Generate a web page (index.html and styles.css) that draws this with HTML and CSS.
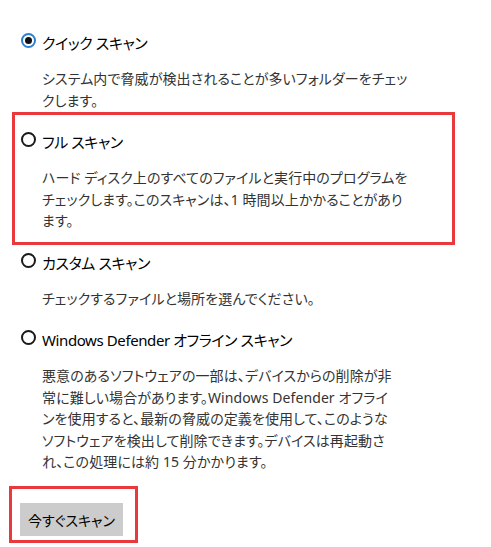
FILE: index.html
```html
<!DOCTYPE html>
<html lang="ja">
<head>
<meta charset="utf-8">
<title>スキャンのオプション</title>
<link rel="stylesheet" href="styles.css">
</head>
<body>
<main class="page">
  <section class="option">
    <div class="option-title"><span class="radio radio-checked"></span><span>クイック スキャン</span></div>
    <p class="option-desc">システム内で脅威が検出されることが多いフォルダーをチェッ<br>クします。</p>
  </section>
  <section class="option option-highlight">
    <div class="option-title"><span class="radio"></span><span>フル スキャン</span></div>
    <p class="option-desc">ハード ディスク上のすべてのファイルと実行中のプログラムを<br>チェックします。このスキャンは、1 時間以上かかることがあり<br>ます。</p>
  </section>
  <section class="option">
    <div class="option-title"><span class="radio"></span><span>カスタム スキャン</span></div>
    <p class="option-desc">チェックするファイルと場所を選んでください。</p>
  </section>
  <section class="option">
    <div class="option-title"><span class="radio"></span><span>Windows Defender オフライン スキャン</span></div>
    <p class="option-desc">悪意のあるソフトウェアの一部は、デバイスからの削除が非<br>常に難しい場合があります。Windows Defender オフライ<br>ンを使用すると、最新の脅威の定義を使用して、このような<br>ソフトウェアを検出して削除できます。デバイスは再起動さ<br>れ、この処理には約 15 分かかります。</p>
  </section>
  <div class="action">
    <button class="btn" type="button">今すぐスキャン</button>
  </div>
</main>
</body>
</html>
```

FILE: styles.css
```css
* { box-sizing: border-box; }
html, body { margin: 0; padding: 0; background: #ffffff; }
body {
  font-family: "Noto Sans", "Noto Sans CJK JP", sans-serif;
  font-feature-settings: "palt";
  color: #000000;
}
.page {
  padding: 32px 0 0 21px;
  display: flex;
  flex-direction: column;
  align-items: flex-start;
}
.option {
  display: flex;
  flex-direction: column;
  margin-bottom: 20px;
}
.option-title {
  display: flex;
  align-items: flex-start;
  gap: 6px;
  font-size: 15px;
  line-height: 22px;
  letter-spacing: -0.4px;
  white-space: nowrap;
}
.radio {
  flex: none;
  width: 15px;
  height: 15px;
  margin-top: 1px;
  border: 2px solid #1a1a1a;
  border-radius: 50%;
  display: flex;
  align-items: center;
  justify-content: center;
}
.radio-checked { border-color: #2b7fd4; }
.radio-checked::after {
  content: "";
  width: 7px;
  height: 7px;
  border-radius: 50%;
  background: #111111;
}
.option-desc {
  margin: 14px 0 0 21px;
  font-size: 14px;
  line-height: 21.5px;
  letter-spacing: 0.1px;
  color: #333333;
  white-space: nowrap;
}
.option-highlight {
  width: 443px;
  margin: -19px 0 6.5px -9px;
  padding: 16px 0 10.5px 6px;
  border: 3px solid #e83a3d;
}
.action {
  margin: -6.5px 0 0 -12px;
  padding: 14px 12px 4px 8px;
  border: 3px solid #e83a3d;
}
.btn {
  display: block;
  width: 103px;
  height: 33px;
  padding: 0;
  border: none;
  background: #cccccc;
  font-family: "Noto Sans", "Noto Sans CJK JP", sans-serif;
  font-feature-settings: "palt";
  font-size: 14px;
  color: #000000;
}
```
